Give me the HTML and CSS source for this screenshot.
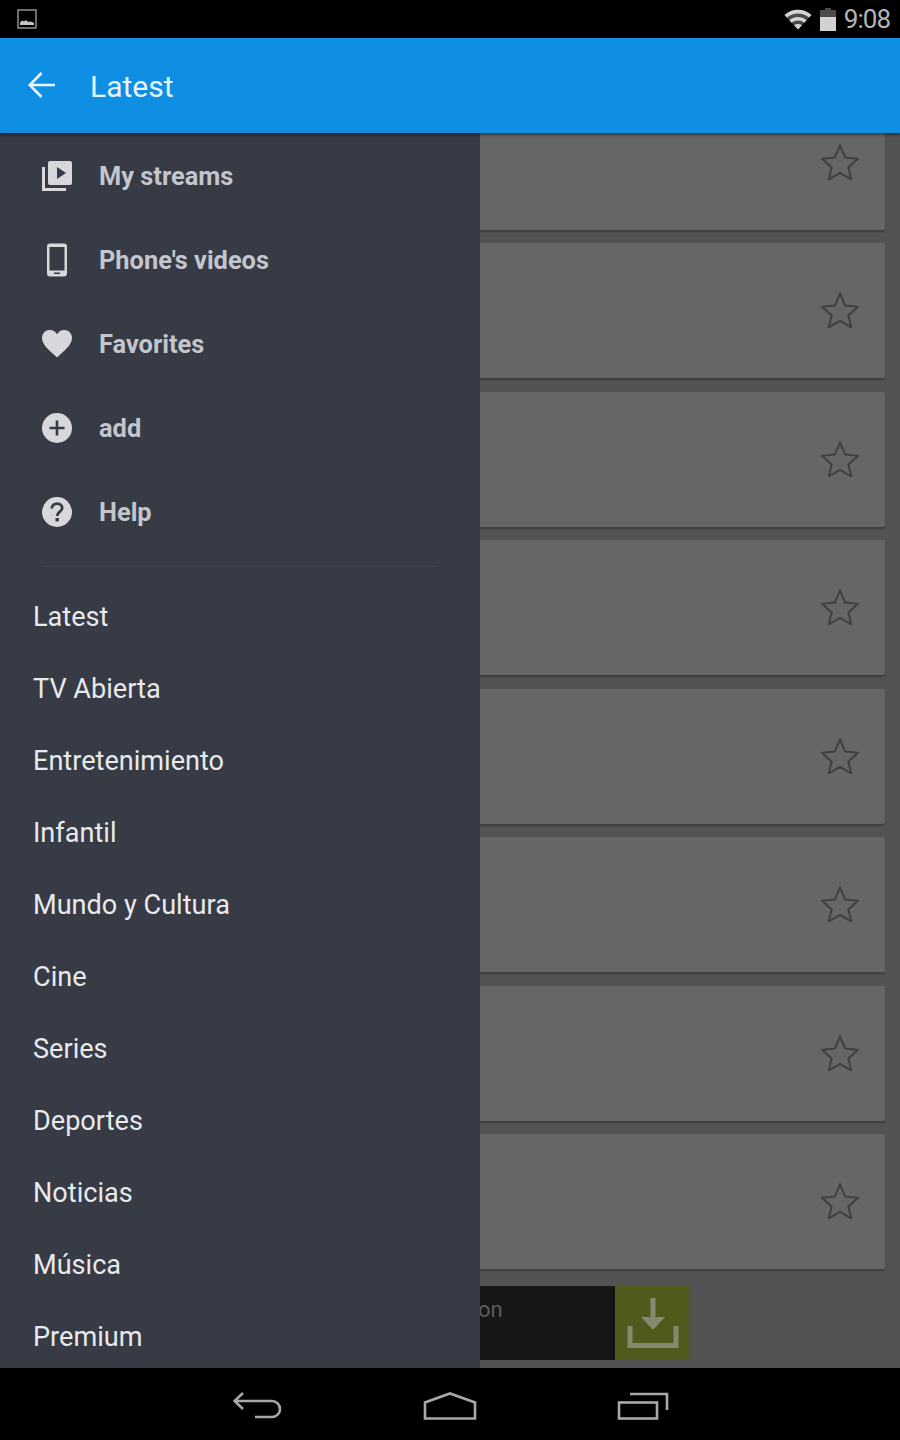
FILE: index.html
```html
<!DOCTYPE html>
<html>
<head>
  <meta charset="utf-8">
  <title>Latest</title>
  <link rel="stylesheet" href="styles.css">
</head>
<body>
  <svg class="defs" width="0" height="0">
    <symbol id="star" viewBox="0 0 38 36">
      <path d="M19 1.5 L24.2 13.6 L37 14.8 L27.4 23.4 L30.2 35.4 L19 29 L7.8 35.4 L10.6 23.4 L1 14.8 L13.8 13.6 Z"/>
    </symbol>
  </svg>

  <div class="status">
    <svg class="notif" width="20" height="20" viewBox="0 0 20 20">
      <rect x="1" y="1" width="18" height="18" fill="none" stroke="#9a9a9a" stroke-width="1.4"/>
      <path d="M3 16 V13.5 L5 11.5 L7 12.5 L9 11 L11 13 L13 12.5 L15 13 L17 14 V16 Z" fill="#c4c4c4"/>
    </svg>
    <div class="status-right">
      <svg width="28" height="22" viewBox="0 0 28 22">
        <path d="M14 21.5 L0.5 7 C8 0 20 0 27.5 7 Z" fill="#4a4a4a"/>
        <path d="M14 21.5 L0.5 7 C8 0 20 0 27.5 7 L25 9.6 C18.5 4 9.5 4 3 9.6 L5.4 12.2 C10.4 8 17.6 8 22.6 12.2 L20.3 14.7 C16.6 11.8 11.4 11.8 7.7 14.7 L10 17.2 C12.4 15.6 15.6 15.6 18 17.2 Z" fill="#d4d4d4"/>
      </svg>
      <svg class="batt" width="16" height="23" viewBox="0 0 16 23">
        <path d="M5 0 H11 V2 H16 V23 H0 V2 H5 Z" fill="#4a4a4a"/>
        <rect y="9" width="16" height="14" fill="#d2d2d2"/>
      </svg>
      <span class="clock">9:08</span>
    </div>
  </div>

  <header class="appbar">
    <svg class="back" width="28" height="28" viewBox="0 0 28 28">
      <path d="M27 14 H2 M13.5 2 L1.8 14 L13.5 26" fill="none" stroke="#e9f5fd" stroke-width="2.6"/>
    </svg>
    <h1 class="title">Latest</h1>
  </header>

  <main class="main">
    <div class="content">
      <div class="card"><svg class="star"><use href="#star"/></svg></div>
      <div class="card"><svg class="star"><use href="#star"/></svg></div>
      <div class="card"><svg class="star"><use href="#star"/></svg></div>
      <div class="card"><svg class="star"><use href="#star"/></svg></div>
      <div class="card"><svg class="star"><use href="#star"/></svg></div>
      <div class="card"><svg class="star"><use href="#star"/></svg></div>
      <div class="card"><svg class="star"><use href="#star"/></svg></div>
      <div class="card"><svg class="star"><use href="#star"/></svg></div>
      <div class="banner">
        <div class="banner-text">on</div>
        <div class="banner-btn">
          <svg width="52" height="52" viewBox="0 0 52 52">
            <path d="M26 1 V27" fill="none" stroke="#87896f" stroke-width="5"/>
            <path d="M14 20 L26 33 L38 20 Z" fill="#87896f"/>
            <path d="M3 29 V48.5 H49 V29" fill="none" stroke="#87896f" stroke-width="5"/>
          </svg>
        </div>
      </div>
    </div>

    <nav class="drawer">
      <ul class="tools">
        <li class="tool">
          <svg class="icon" viewBox="0 0 30 32">
            <path d="M1.5 7 V29.5 H24" fill="none" stroke="#d6d8dc" stroke-width="3"/>
            <rect x="6" y="1" width="24" height="24" rx="2" fill="#d6d8dc"/>
            <path d="M15 7 L24 13 L15 19 Z" fill="#363b46"/>
          </svg>
          My streams
        </li>
        <li class="tool">
          <svg class="icon" viewBox="0 0 30 34">
            <path fill-rule="evenodd" d="M8 0.5 H22 A3 3 0 0 1 25 3.5 V30.5 A3 3 0 0 1 22 33.5 H8 A3 3 0 0 1 5 30.5 V3.5 A3 3 0 0 1 8 0.5 Z M7.5 4 V27.5 H22.5 V4 Z" fill="#d6d8dc"/>
            <rect x="12" y="29.5" width="6" height="1.5" fill="#363b46"/>
          </svg>
          Phone's videos
        </li>
        <li class="tool">
          <svg class="icon" viewBox="0 0 30 28">
            <path d="M15 27.5 C9 21.5 0 15.5 0 8 C0 3.5 3.5 0 7.8 0 C10.8 0 13.5 1.6 15 4.2 C16.5 1.6 19.2 0 22.2 0 C26.5 0 30 3.5 30 8 C30 15.5 21 21.5 15 27.5 Z" fill="#d6d8dc"/>
          </svg>
          Favorites
        </li>
        <li class="tool">
          <svg class="icon" viewBox="0 0 30 30">
            <circle cx="15" cy="15" r="15" fill="#d6d8dc"/>
            <path d="M15 7.5 V22.5 M7.5 15 H22.5" stroke="#363b46" stroke-width="2.6"/>
          </svg>
          add
        </li>
        <li class="tool">
          <svg class="icon" viewBox="0 0 30 30">
            <circle cx="15" cy="15" r="15" fill="#d6d8dc"/>
            <path d="M9.8 11.5 C9.8 8.5 12 6.6 15 6.6 C18 6.6 20.2 8.4 20.2 11 C20.2 14.5 15.2 14.8 15.2 19" fill="none" stroke="#363b46" stroke-width="2.8"/>
            <rect x="13.5" y="21" width="3.4" height="3.4" fill="#363b46"/>
          </svg>
          Help
        </li>
      </ul>
      <div class="divider"></div>
      <ul class="cats">
        <li class="cat">Latest</li>
        <li class="cat">TV Abierta</li>
        <li class="cat">Entretenimiento</li>
        <li class="cat">Infantil</li>
        <li class="cat">Mundo y Cultura</li>
        <li class="cat">Cine</li>
        <li class="cat">Series</li>
        <li class="cat">Deportes</li>
        <li class="cat">Noticias</li>
        <li class="cat">Música</li>
        <li class="cat">Premium</li>
      </ul>
    </nav>
  </main>

  <footer class="navbar">
    <svg width="50" height="28" viewBox="0 0 50 28">
      <path d="M10 1 L1.5 9 L10 17 M2 9 H39 A7.5 7.5 0 0 1 39 25 H22" fill="none" stroke="#a8a8a8" stroke-width="2.6"/>
    </svg>
    <svg width="54" height="28" viewBox="0 0 54 28">
      <path d="M2 26.5 V10.5 L27 1.5 L52 10.5 V26.5 Z" fill="none" stroke="#a8a8a8" stroke-width="2.6"/>
    </svg>
    <svg width="52" height="28" viewBox="0 0 52 28">
      <rect x="2" y="10.5" width="38" height="16" fill="none" stroke="#a8a8a8" stroke-width="2.6"/>
      <path d="M13 2 H50 V18" fill="none" stroke="#a8a8a8" stroke-width="2.6"/>
    </svg>
  </footer>
</body>
</html>
```

FILE: styles.css
```css
html, body { margin: 0; padding: 0; }
body {
  width: 900px;
  height: 1440px;
  display: flex;
  flex-direction: column;
  overflow: hidden;
  background: #000;
  font-family: Roboto, "Liberation Sans", sans-serif;
}
ul { list-style: none; margin: 0; padding: 0; }
.defs { position: absolute; }

/* status bar */
.status {
  height: 38px;
  flex: none;
  display: flex;
  align-items: center;
  justify-content: space-between;
  padding: 0 10px 0 17px;
  background: #000;
}
.status-right { display: flex; align-items: center; }
.batt { margin-left: 8px; margin-right: 8px; }
.clock { font-size: 26px; letter-spacing: -1px; color: #b4b4b4; line-height: 40px; }

/* action bar */
.appbar {
  height: 95px;
  flex: none;
  display: flex;
  align-items: center;
  background: #0f8fe4;
  box-shadow: 0 2px 3px rgba(0,0,0,.45);
  position: relative;
  z-index: 2;
}
.back { margin-left: 28px; margin-top: -2px; }
.title {
  margin: 0 0 0 34px;
  padding-top: 2px;
  font-size: 30px;
  font-weight: 400;
  color: #e6f4fd;
}

/* dimmed page under the drawer */
.main {
  flex: 1;
  position: relative;
  overflow: hidden;
  background: #535353;
}
.content {
  display: flex;
  flex-direction: column;
  gap: 13.5px;
  margin-top: -38.5px;
  padding: 0 15px;
}
.card {
  height: 135px;
  flex: none;
  display: flex;
  align-items: center;
  justify-content: flex-end;
  padding-right: 26px;
  background: #666;
  border-radius: 2px;
  box-shadow: 0 2px 2px rgba(0,0,0,.25);
}
.star {
  width: 38px;
  height: 36px;
  margin-bottom: 1px;
  fill: none;
  stroke: #404040;
  stroke-width: 2;
}
.banner {
  display: flex;
  width: 480px;
  height: 74px;
  margin: 3.5px 0 0 195px;
}
.banner-text {
  flex: 1;
  padding: 11px 0 0 268px;
  background: #161616;
  color: #5c5c5c;
  font-size: 22px;
}
.banner-btn {
  width: 75px;
  display: flex;
  align-items: center;
  justify-content: center;
  background: #505a1c;
}

/* drawer */
.drawer {
  position: absolute;
  left: 0;
  top: 0;
  bottom: 0;
  width: 480px;
  overflow: hidden;
  background: #363b46;
}
.tools { padding-top: 1px; }
.tool {
  height: 84px;
  display: flex;
  align-items: center;
  padding-left: 42px;
  font-size: 25.4px;
  font-weight: 700;
  color: #c3c6cc;
}
.icon {
  width: 30px;
  height: 34px;
  margin-right: 27px;
  flex: none;
}
.divider {
  height: 1px;
  margin: 12px 44px 14px;
  background: #414651;
}
.cat {
  height: 72px;
  line-height: 72px;
  padding-left: 33px;
  font-size: 27.1px;
  color: #e8e9eb;
}

/* soft keys */
.navbar {
  height: 72px;
  flex: none;
  display: flex;
  align-items: center;
  justify-content: center;
  gap: 140px;
  padding: 4px 0 0 2px;
  box-sizing: border-box;
  background: #000;
}
```
